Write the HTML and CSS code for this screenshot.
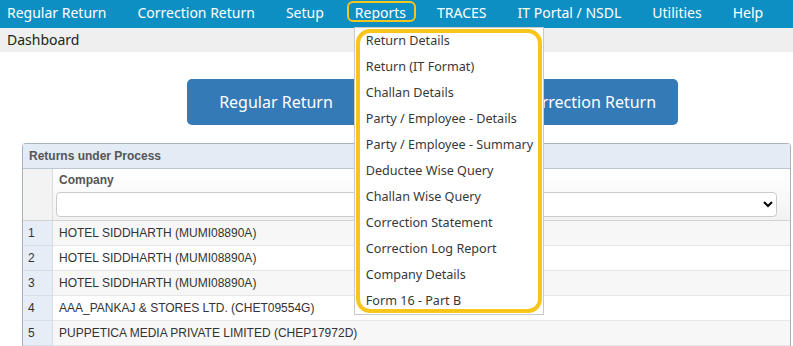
FILE: index.html
```html
<!DOCTYPE html>
<html lang="en">
<head>
  <meta charset="UTF-8" />
  <title>Dashboard</title>
  <link rel="stylesheet" href="styles.css">
</head>
<body>
  <nav class="topnav">
    <a class="nav-item">Regular Return</a>
    <a class="nav-item">Correction Return</a>
    <a class="nav-item">Setup</a>
    <a class="nav-item active">Reports
      <ul class="dropdown">
        <li>Return Details</li>
        <li>Return (IT Format)</li>
        <li>Challan Details</li>
        <li>Party / Employee - Details</li>
        <li>Party / Employee - Summary</li>
        <li>Deductee Wise Query</li>
        <li>Challan Wise Query</li>
        <li>Correction Statement</li>
        <li>Correction Log Report</li>
        <li>Company Details</li>
        <li>Form 16 - Part B</li>
      </ul>
    </a>
    <a class="nav-item">TRACES</a>
    <a class="nav-item">IT Portal / NSDL</a>
    <a class="nav-item">Utilities</a>
    <a class="nav-item">Help</a>
  </nav>
  <div class="crumb">Dashboard</div>

  <div class="actions">
    <button class="big-btn">Regular Return</button>
    <button class="big-btn">Correction Return</button>
  </div>

  <div class="panel">
    <div class="panel-title">Returns under Process</div>
    <table class="grid">
      <thead>
        <tr>
          <th class="num"></th>
          <th>
            <div class="col-label">Company</div>
            <select class="filter"><option></option></select>
          </th>
        </tr>
      </thead>
      <tbody>
        <tr><td class="num">1</td><td>HOTEL SIDDHARTH (MUMI08890A)</td></tr>
        <tr><td class="num">2</td><td>HOTEL SIDDHARTH (MUMI08890A)</td></tr>
        <tr><td class="num">3</td><td>HOTEL SIDDHARTH (MUMI08890A)</td></tr>
        <tr><td class="num">4</td><td>AAA_PANKAJ &amp; STORES LTD. (CHET09554G)</td></tr>
        <tr><td class="num">5</td><td>PUPPETICA MEDIA PRIVATE LIMITED (CHEP17972D)</td></tr>
      </tbody>
    </table>
  </div>
</body>
</html>
```

FILE: styles.css
```css
body {
  margin: 0;
  font-family: 'Noto Sans', 'Open Sans', sans-serif;
  background: #fff;
  overflow: hidden;
}
.topnav {
  display: flex;
  height: 28px;
  align-items: center;
  background: #0e8fc4;
  padding-left: 7px;
  gap: 31px;
}
.nav-item {
  position: relative;
  color: #fff;
  font-size: 14px;
  line-height: 26px;
  padding-bottom: 2px;
  cursor: pointer;
}
.nav-item.active::before {
  content: '';
  position: absolute;
  left: -8px;
  right: -10px;
  top: 1px;
  bottom: 6px;
  border: 2px solid #f3c51d;
  border-radius: 6px;
}
.dropdown {
  position: absolute;
  left: -1px;
  top: 27px;
  width: 188px;
  margin: 0;
  padding: 0;
  list-style: none;
  background: #fff;
  border: 1px solid #c9c9c9;
  z-index: 5;
}
.dropdown::after {
  content: '';
  position: absolute;
  left: 1px;
  right: 1px;
  top: 1px;
  bottom: 1px;
  border: 4px solid #f7c51b;
  border-radius: 14px;
  pointer-events: none;
}
.dropdown li {
  padding-left: 11px;
  font-size: 12.6px;
  line-height: 26px;
  color: #383838;
  white-space: nowrap;
}
.crumb {
  background: #efefef;
  height: 24px;
  line-height: 24px;
  padding-left: 7px;
  font-size: 14px;
  color: #222;
}
.actions {
  display: flex;
  gap: 135px;
  margin: 27px 0 18px 0;
  padding-left: 187px;
}
.big-btn {
  width: 178px;
  height: 46px;
  background: #337ab7;
  border: none;
  border-radius: 5px;
  color: #fff;
  font-family: inherit;
  font-size: 16px;
}
.panel {
  margin-left: 22px;
  width: 767px;
  border: 1px solid #aab3bd;
  border-bottom: none;
  border-radius: 4px 4px 0 0;
  font-family: 'Liberation Sans', Arial, sans-serif;
}
.panel-title {
  height: 24px;
  line-height: 24px;
  background: #e3ebf5;
  border-bottom: 1px solid #bcc6d2;
  padding-left: 6px;
  font-size: 12px;
  font-weight: bold;
  color: #555;
}
.grid {
  width: 100%;
  border-collapse: collapse;
}
.grid th {
  text-align: left;
  vertical-align: top;
  height: 51px;
  padding: 0 0 0 3px;
  background: linear-gradient(#fff, #f2f2f2);
  border-bottom: 1px solid #d3d3d3;
}
.grid th.num {
  width: 29px;
  padding: 0;
  background: #f3f3f3;
  border-right: 1px solid #dcdcdc;
}
.col-label {
  font-size: 12px;
  font-weight: bold;
  color: #555;
  padding: 4px 0 0 3px;
  height: 18px;
}
.filter {
  display: block;
  width: 721px;
  height: 25px;
  margin-top: 1px;
  border: 1px solid #cbcbcb;
  border-radius: 4px;
  background: #fff;
}
.grid td {
  height: 24px;
  padding: 0 0 0 6px;
  font-size: 12px;
  color: #333;
  border-bottom: 1px solid #e6e6e6;
}
.grid tbody tr:nth-child(odd) td {
  background: #f7f7f7;
}
.grid td.num {
  padding-left: 5px;
  background: #e6edf7 !important;
  border-right: 1px solid #dcdcdc;
  border-bottom-color: #d6deea;
}
```
